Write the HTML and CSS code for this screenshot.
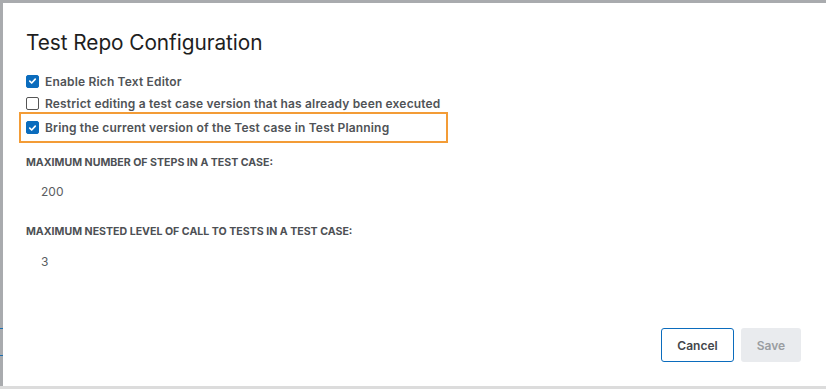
FILE: index.html
```html
<!DOCTYPE html>
<html>
<head>
<meta charset="utf-8">
<link rel="stylesheet" href="styles.css">
</head>
<body>
<div class="backdrop">
  <div class="edge-marks"></div>
  <div class="dialog">
    <h1 class="title">Test Repo Configuration</h1>
    <div class="options">
      <label class="option">
        <span class="box checked"><svg viewBox="0 0 12 12" width="12" height="12"><path d="M3 6.2 L5.1 8.2 L9 4" fill="none" stroke="#fff" stroke-width="1.8" stroke-linecap="round" stroke-linejoin="round"/></svg></span>
        <span class="label">Enable Rich Text Editor</span>
      </label>
      <label class="option">
        <span class="box"></span>
        <span class="label">Restrict editing a test case version that has already been executed</span>
      </label>
      <label class="option highlight">
        <span class="box checked"><svg viewBox="0 0 12 12" width="12" height="12"><path d="M3 6.2 L5.1 8.2 L9 4" fill="none" stroke="#fff" stroke-width="1.8" stroke-linecap="round" stroke-linejoin="round"/></svg></span>
        <span class="label">Bring the current version of the Test case in Test Planning</span>
      </label>
    </div>
    <div class="field first">
      <div class="field-label">Maximum number of steps in a test case:</div>
      <div class="field-value">200</div>
    </div>
    <div class="field">
      <div class="field-label">Maximum nested level of call to tests in a test case:</div>
      <div class="field-value">3</div>
    </div>
    <div class="footer">
      <button class="btn cancel">Cancel</button>
      <button class="btn save">Save</button>
    </div>
  </div>
</div>
</body>
</html>
```
FILE: styles.css
```css
html, body {
  margin: 0;
  padding: 0;
}
body {
  width: 826px;
  height: 389px;
  overflow: hidden;
  background: #a9abae;
  font-family: "Inter", "Noto Sans", sans-serif;
}
.backdrop {
  position: relative;
  width: 826px;
  height: 389px;
  padding: 3px 0 0 3px;
  box-sizing: border-box;
  border-bottom: 3px solid #dcdcdc;
}
.edge-marks {
  position: absolute;
  left: 0;
  top: 328px;
  width: 3px;
  height: 26px;
  border-top: 1px solid #1d6fb0;
  border-bottom: 1px solid #1d6fb0;
}
.dialog {
  width: 823px;
  height: 383px;
  background: #fff;
  box-sizing: border-box;
  padding: 27px 0 0 23px;
  display: flex;
  flex-direction: column;
}
.title {
  margin: 0;
  font-size: 20.8px;
  font-weight: 400;
  color: #1e1e1e;
  line-height: 25px;
  letter-spacing: -0.05px;
}
.options {
  display: flex;
  flex-direction: column;
  margin-top: 15px;
}
.option {
  display: flex;
  align-items: center;
  height: 22.5px;
  width: 429px;
  box-sizing: border-box;
}
.highlight {
  margin-left: -7px;
  padding-left: 5px;
  border: 2px solid #f39c36;
  height: 31px;
  margin-top: -3px;
}
.box {
  width: 13px;
  height: 13px;
  box-sizing: border-box;
  border: 1px solid #555;
  border-radius: 2px;
  background: #fff;
  display: flex;
  align-items: center;
  justify-content: center;
  flex: none;
}
.box.checked {
  background: #0b6cbd;
  border-color: #0b6cbd;
}
.label {
  margin-left: 6px;
  font-size: 12px;
  font-weight: 600;
  color: #505357;
  white-space: nowrap;
  letter-spacing: 0.17px;
}
.field {
  display: flex;
  flex-direction: column;
}
.field.first {
  margin-top: 13px;
}
.field + .field {
  margin-top: 25px;
}
.field-label {
  font-size: 10.6px;
  font-weight: 700;
  text-transform: uppercase;
  color: #4d5054;
  line-height: 14px;
  letter-spacing: 0;
}
.field-value {
  margin-top: 14px;
  padding-left: 15px;
  font-size: 12px;
  color: #5a5d61;
  line-height: 16px;
}
.field + .field .field-value {
  margin-top: 15px;
}
.footer {
  margin-top: auto;
  margin-bottom: 24px;
  display: flex;
  justify-content: flex-end;
  gap: 7px;
  padding-right: 25px;
}
.btn {
  height: 34px;
  border-radius: 3px;
  font-family: "Inter", "Noto Sans", sans-serif;
  font-size: 12px;
  font-weight: 600;
  padding: 0;
  cursor: pointer;
}
.cancel {
  width: 73px;
  background: #fff;
  border: 1px solid #0b6cbd;
  color: #44474b;
}
.save {
  width: 60px;
  background: #e9ebee;
  border: none;
  color: #9a9da1;
}
```
